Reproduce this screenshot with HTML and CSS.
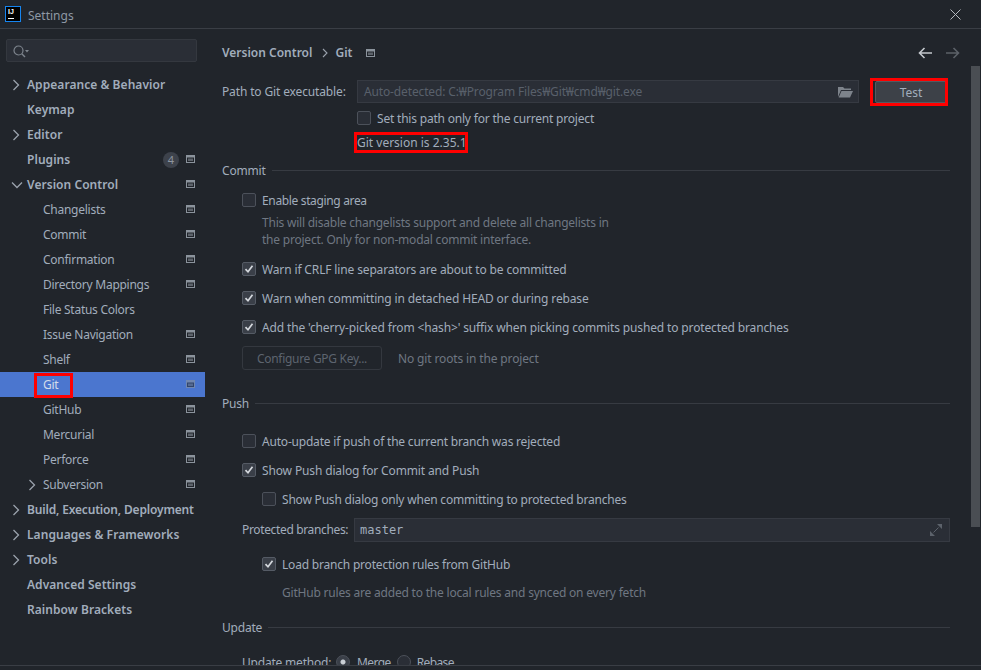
FILE: index.html
```html
<!DOCTYPE html>
<html lang="en">
<head>
<meta charset="utf-8">
<title>Settings</title>
<link rel="stylesheet" href="styles.css">
</head>
<body>
<svg class="defs" width="0" height="0">
  <symbol id="proj" viewBox="0 0 9 8"><path d="M0 0h9v8H0z" fill="#8b939c"/><path d="M1 2.500h7V7H1z" fill="#21252b"/><path d="M2 3.500h5V6H2z" fill="#5d636b"/></symbol>
  <symbol id="chev-r" viewBox="0 0 8 12"><path d="M1.500 1l5 5-5 5" fill="none" stroke="#9aa2ac" stroke-width="1.300"/></symbol>
  <symbol id="chev-d" viewBox="0 0 12 8"><path d="M1 1.500l5 5 5-5" fill="none" stroke="#9aa2ac" stroke-width="1.300"/></symbol>
  <symbol id="tick" viewBox="0 0 14 14"><rect x=".5" y=".5" width="13" height="13" rx="1.500" fill="#3a3f48" stroke="#555b65"/><path d="M3.500 7.200l2.500 2.600 4.500-6" fill="none" stroke="#d5d9de" stroke-width="1.700"/></symbol>
  <symbol id="box" viewBox="0 0 14 14"><rect x=".5" y=".5" width="13" height="13" rx="1.500" fill="#2a2e36" stroke="#4c515a"/></symbol>
</svg>
<div class="window">
  <header class="titlebar">
    <div class="logo"><span class="logo-text">IJ</span><span class="logo-bar"></span></div>
    <span class="title">Settings</span>
    <svg class="close" width="11" height="11" viewBox="0 0 11 11"><path d="M.5.500l10 10M10.500.5l-10 10" stroke="#b4b9bf" stroke-width="1"/></svg>
  </header>
  <div class="body">
    <nav class="sidebar">
      <div class="search">
        <svg width="16" height="13" viewBox="0 0 16 13"><circle cx="5.500" cy="5.500" r="4.500" fill="none" stroke="#7d848d" stroke-width="1.200"/><path d="M8.800 8.800l3.200 3.200" stroke="#7d848d" stroke-width="1.400"/><path d="M12 5h4l-2 2.500z" fill="#7d848d"/></svg>
      </div>
      <ul class="tree">
        <li class="node bold"><svg class="arrow"><use href="#chev-r"/></svg>Appearance &amp; Behavior</li>
        <li class="node bold">Keymap</li>
        <li class="node bold"><svg class="arrow"><use href="#chev-r"/></svg>Editor</li>
        <li class="node bold">Plugins<span class="badge">4</span><svg class="pi"><use href="#proj"/></svg></li>
        <li class="node bold"><svg class="arrow arrow-d"><use href="#chev-d"/></svg>Version Control<svg class="pi"><use href="#proj"/></svg></li>
        <li class="node sub">Changelists<svg class="pi"><use href="#proj"/></svg></li>
        <li class="node sub">Commit<svg class="pi"><use href="#proj"/></svg></li>
        <li class="node sub">Confirmation<svg class="pi"><use href="#proj"/></svg></li>
        <li class="node sub">Directory Mappings<svg class="pi"><use href="#proj"/></svg></li>
        <li class="node sub">File Status Colors</li>
        <li class="node sub">Issue Navigation<svg class="pi"><use href="#proj"/></svg></li>
        <li class="node sub">Shelf<svg class="pi"><use href="#proj"/></svg></li>
        <li class="node sub selected">Git<svg class="pi pi-sel"><use href="#proj"/></svg><span class="mark mark-git"></span></li>
        <li class="node sub">GitHub<svg class="pi"><use href="#proj"/></svg></li>
        <li class="node sub">Mercurial<svg class="pi"><use href="#proj"/></svg></li>
        <li class="node sub">Perforce<svg class="pi"><use href="#proj"/></svg></li>
        <li class="node sub"><svg class="arrow arrow-sub"><use href="#chev-r"/></svg>Subversion<svg class="pi"><use href="#proj"/></svg></li>
        <li class="node bold tight"><svg class="arrow"><use href="#chev-r"/></svg>Build, Execution, Deployment</li>
        <li class="node bold"><svg class="arrow"><use href="#chev-r"/></svg>Languages &amp; Frameworks</li>
        <li class="node bold"><svg class="arrow"><use href="#chev-r"/></svg>Tools</li>
        <li class="node bold">Advanced Settings</li>
        <li class="node bold">Rainbow Brackets</li>
      </ul>
    </nav>
    <main class="content">
      <div class="crumbs">
        <span class="crumb">Version Control</span>
        <svg class="crumb-sep" width="6" height="10" viewBox="0 0 6 10"><path d="M1 1l4 4-4 4" fill="none" stroke="#9aa2ac" stroke-width="1.100"/></svg>
        <span class="crumb">Git</span>
        <svg class="crumb-pi"><use href="#proj"/></svg>
        <span class="spacer"></span>
        <svg class="nav-arrow" width="14" height="12" viewBox="0 0 14 12"><path d="M6.500 1l-5 5 5 5M2 6h12" fill="none" stroke="#c4c8cd" stroke-width="1.600"/></svg>
        <svg class="nav-arrow nav-last" width="14" height="12" viewBox="0 0 14 12"><path d="M7.500 1l5 5-5 5M12 6H0" fill="none" stroke="#5c6168" stroke-width="1.600"/></svg>
      </div>
      <div class="path-row">
        <label class="path-label wide">Path to Git executable:</label>
        <div class="field path-field">
          <span class="placeholder">Auto-detected: C:₩Program Files₩Git₩cmd₩git.exe</span>
          <svg width="15" height="12" viewBox="0 0 15 12"><path d="M0 1h5l1.500 1.500H13V4H3L0 11z" fill="#7d838b"/><path d="M3.500 5H15l-3 6.500H.7z" fill="#7d838b"/></svg>
        </div>
        <div class="test-wrap"><button class="btn-test">Test</button><span class="mark mark-test"></span></div>
      </div>
      <div class="line indent-path mt3"><svg class="cb"><use href="#box"/></svg><span>Set this path only for the current project</span></div>
      <div class="line indent-path"><span class="version">Git version is 2.35.1<span class="mark mark-version"></span></span></div>

      <div class="section mt6"><span>Commit</span><i></i></div>
      <div class="line indent1 mt8"><svg class="cb"><use href="#box"/></svg><span class="tight">Enable staging area</span></div>
      <p class="hint hint1 mt2">This will disable changelists support and delete all changelists in<br>the project. Only for non-modal commit interface.</p>
      <div class="line indent1 mt9"><svg class="cb"><use href="#tick"/></svg><span class="wide">Warn if CRLF line separators are about to be committed</span></div>
      <div class="line indent1 mt5"><svg class="cb"><use href="#tick"/></svg><span class="wide">Warn when committing in detached HEAD or during rebase</span></div>
      <div class="line indent1 mt5"><svg class="cb"><use href="#tick"/></svg><span class="wide">Add the 'cherry-picked from &lt;hash&gt;' suffix when picking commits pushed to protected branches</span></div>
      <div class="gpg-row indent1 mt7"><button class="btn-gpg">Configure GPG Key...</button><span class="muted">No git roots in the project</span></div>

      <div class="section mt23"><span>Push</span><i></i></div>
      <div class="line indent1 mt16"><svg class="cb"><use href="#box"/></svg><span>Auto-update if push of the current branch was rejected</span></div>
      <div class="line indent1 mt5"><svg class="cb"><use href="#tick"/></svg><span class="wide">Show Push dialog for Commit and Push</span></div>
      <div class="line indent2 mt5"><svg class="cb"><use href="#box"/></svg><span>Show Push dialog only when committing to protected branches</span></div>
      <div class="branch-row indent1 mt7">
        <label class="tight">Protected branches:</label>
        <div class="field branch-field"><span class="mono">master</span>
          <svg width="12" height="12" viewBox="0 0 12 12"><path d="M7 0h5v5zM0 12V7l5 5z" fill="#5c626b"/><path d="M8.500 3.500l-5 5" stroke="#5c626b"/></svg>
        </div>
      </div>
      <div class="line indent2 mt10"><svg class="cb"><use href="#tick"/></svg><span>Load branch protection rules from GitHub</span></div>
      <p class="hint hint2 mt8">GitHub rules are added to the local rules and synced on every fetch</p>

      <div class="section mt16"><span>Update</span><i></i></div>
      <div class="line indent1 mt13"><span class="update-label">Update method:</span><span class="radio radio-on"></span><span class="radio-text">Merge</span><span class="radio radio-2"></span><span class="radio-text">Rebase</span></div>
      <div class="scrollbar"></div>
    </main>
  </div>
  <footer class="foot"></footer>
</div>
</body>
</html>
```
FILE: styles.css
```css
* { box-sizing: border-box; }
html, body { margin: 0; padding: 0; }
body {
  width: 981px; height: 670px; overflow: hidden;
  background: #21252b; color: #a1adbc;
  font: 12px/24px "Noto Sans", "Noto Sans CJK KR", sans-serif;
  letter-spacing: -0.2px;
  white-space: nowrap;
}
.wide { letter-spacing: -0.14px; }
.defs { position: absolute; }
.window { display: flex; flex-direction: column; height: 670px; }
.titlebar {
  height: 29px; flex: none; display: flex; align-items: center;
  padding: 0 20px 0 5px; border-bottom: 1px solid #3a3e45;
}
.logo {
  position: relative; width: 16px; height: 16px; background: #000;
  border: 1px solid #1685f0; margin-right: 7px;
}
.logo-text {
  position: absolute; left: 2px; top: 0; color: #fff; letter-spacing: 0;
  font: 700 7px/9px "Liberation Sans", sans-serif;
}
.logo-bar { position: absolute; left: 2px; bottom: 2px; width: 6px; height: 1px; background: #fff; }
.title { color: #8e98a4; flex: 1; padding-top: 3px; letter-spacing: 0; }
.close { flex: none; }
.body { flex: 1; min-height: 0; display: flex; }
.sidebar { width: 205px; flex: none; padding-top: 10px; }
.search {
  width: 191px; height: 23px; margin-left: 6px; padding: 5px 0 0 6px;
  background: #2a2e36; border: 1px solid #34383f; border-radius: 2px; display: flex; align-items: flex-start;
}
.tree { list-style: none; margin: 10px 0 0; padding: 0; }
.node { position: relative; height: 25px; line-height: 25px; display: flex; align-items: center; padding-left: 27px; padding-right: 10px; }
.bold { font-weight: 600; letter-spacing: 0.05px; }
.bold.tight { letter-spacing: -0.17px; }
.tight { letter-spacing: -0.35px; }
.sub { padding-left: 43px; letter-spacing: -0.26px; }
.selected { background: #4b76cf; color: #d4dcea; }
.arrow { position: absolute; left: 12px; top: 7px; width: 8px; height: 12px; }
.arrow-d { left: 11px; top: 9px; width: 12px; height: 8px; }
.arrow-sub { left: 28px; }
.pi { width: 9px; height: 8px; margin-left: auto; flex: none; margin-bottom: 2px; }
.pi-sel { opacity: .6; }
.badge {
  margin-left: auto; width: 16px; height: 16px; border-radius: 50%; background: #3d424b;
  color: #8e96a0; font: 400 11px/16px "Noto Sans", sans-serif; text-align: center;
}
.badge + .pi { margin-left: 7px; }
.mark { position: absolute; border: 3px solid #f00; pointer-events: none; }
.mark-git { left: 34px; top: 1px; width: 39px; height: 25px; }
.content { position: relative; flex: 1; min-width: 0; overflow: hidden; padding: 0 31px 0 17px; }
.crumbs { height: 46px; display: flex; align-items: center; padding-top: 1px; }
.crumb { font-weight: 600; letter-spacing: 0; }
.crumb-sep { margin: 0 7px 0 10px; }
.crumb-pi { width: 9px; height: 8px; margin-left: 14px; }
.spacer { flex: 1; }
.nav-arrow { margin-left: 14px; }
.nav-last { margin-right: -10px; }
.path-row { display: flex; height: 23px; margin-top: 5px; align-items: center; }
.path-label { width: 135px; flex: none; }
.field {
  display: flex; align-items: center; justify-content: space-between; height: 100%;
  background: #2a2e36; border: 1px solid #363a42;
}
.path-field { width: 502px; flex: none; padding: 0 5px 0 6px; }
.placeholder { color: #59606b; letter-spacing: -0.14px; }
.test-wrap { position: relative; margin-left: 16px; }
.btn-test {
  display: block; width: 72px; height: 22px; padding: 2px 0 0; border: 1px solid #555a62; border-radius: 2px;
  background: #3d4148; color: #a1adbc; font: inherit; line-height: 18px; letter-spacing: 0;
}
.mark-test { left: -5px; top: -3px; width: 78px; height: 28px; }
.line { height: 24px; display: flex; align-items: center; }
.line > span:not(.radio) { position: relative; top: 1px; }
.cb { width: 14px; height: 14px; margin-right: 6px; flex: none; }
.indent-path { margin-left: 135px; }
.indent1 { margin-left: 20px; }
.indent2 { margin-left: 40px; }
.version { letter-spacing: 0; }
.mark-version { left: -3px; top: 1px; width: 114px; height: 21px; }
.section { display: flex; align-items: center; height: 20px; }
.section span { position: relative; top: 1px; }
.section i { flex: 1; height: 1px; background: #373b42; margin-left: 6px; }
.hint { margin: 0; line-height: 17px; color: #6f7782; }
.hint1 { margin-left: 40px; letter-spacing: -0.22px; }
.hint2 { margin-left: 60px; letter-spacing: -0.2px; }
.gpg-row { display: flex; align-items: center; height: 24px; }
.btn-gpg {
  width: 140px; height: 24px; padding: 2px 0 0; background: transparent; border: 1px solid #34383f;
  border-radius: 3px; color: #5d646f; font: inherit; line-height: 20px; letter-spacing: -0.3px; margin-right: 16px;
}
.muted { color: #6f7782; position: relative; top: 1px; letter-spacing: -0.14px; }
.branch-row { display: flex; align-items: center; height: 24px; }
.branch-row label { width: 112px; flex: none; }
.branch-field { flex: 1; padding: 0 7px 0 5px; }
.mono { font-family: "DejaVu Sans Mono", monospace; font-size: 12px; letter-spacing: 0; }
.update-label { width: 94px; flex: none; }
.radio {
  display: inline-block; width: 14px; height: 14px; border-radius: 50%; background: #2a2e36; border: 1px solid #4c515a; margin: 0 7px 0 0; flex: none;
}
.radio-on { background: radial-gradient(circle, #c9ced4 0 2px, #3a3f48 3px); }
.radio-2 { margin: 0 6px 0 6px; }
.radio-text { letter-spacing: -0.6px; }
.scrollbar { position: absolute; right: 1px; top: 37px; width: 9px; height: 461px; background: #4a4e53; }
.foot { height: 5px; flex: none; border-top: 1px solid #3a3e45; background: #21252b; }
.mt2 { margin-top: 2px; } .mt3 { margin-top: 3px; } .mt5 { margin-top: 5px; } .mt6 { margin-top: 6px; }
.mt7 { margin-top: 7px; } .mt8 { margin-top: 8px; } .mt9 { margin-top: 9px; } .mt10 { margin-top: 10px; }
.mt13 { margin-top: 13px; } .mt16 { margin-top: 16px; } .mt23 { margin-top: 23px; }
```
